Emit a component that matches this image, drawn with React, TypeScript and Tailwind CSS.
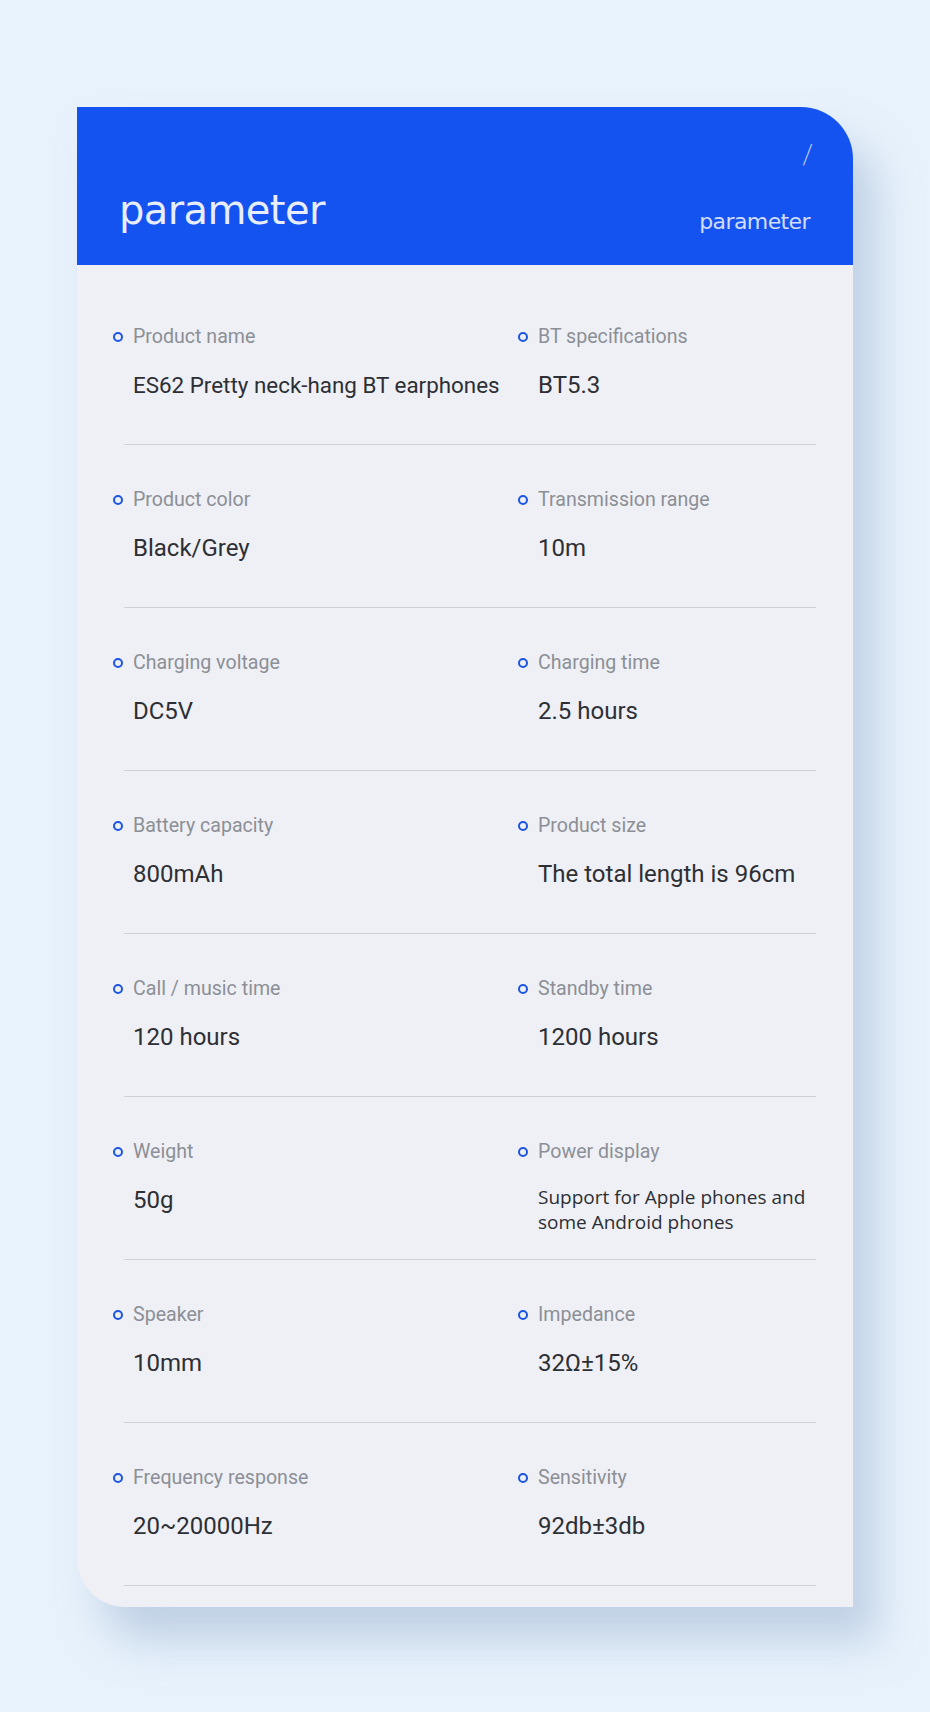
const specs: [string, string, string, string][] = [
  ['Product name', 'ES62 Pretty neck-hang BT earphones', 'BT specifications', 'BT5.3'],
  ['Product color', 'Black/Grey', 'Transmission range', '10m'],
  ['Charging voltage', 'DC5V', 'Charging time', '2.5 hours'],
  ['Battery capacity', '800mAh', 'Product size', 'The total length is 96cm'],
  ['Call / music time', '120 hours', 'Standby time', '1200 hours'],
  ['Weight', '50g', 'Power display', 'Support for Apple phones and some Android phones'],
  ['Speaker', '10mm', 'Impedance', '32Ω±15%'],
  ['Frequency response', '20~20000Hz', 'Sensitivity', '92db±3db'],
];

function Cell({ label, value }: { label: string; value: string }) {
  // the power display text wraps onto two lines in a smaller face
  const wrap = value.startsWith('Support');
  const tight = value.startsWith('ES62');
  return (
    <div className="flex flex-col">
      <div className="flex items-center h-[24px] mt-[43px]">
        <span className="w-[10px] h-[10px] rounded-full border-[2px] border-[#1c55e3] mr-[10px] shrink-0" />
        <span className="text-[19.6px] text-[#8c8f96] whitespace-nowrap">{label}</span>
      </div>
      {wrap ? (
        <div className="ml-[20px] mt-[21px] text-[19px] leading-[25px] text-[#2d2f34] w-[290px] font-['Open_Sans',sans-serif]">
          {value}
        </div>
      ) : (
        <div
          className={
            tight
              ? 'ml-[20px] mt-[21px] h-[30px] leading-[30px] text-[22.4px] text-[#2d2f34] whitespace-nowrap'
              : 'ml-[20px] mt-[21px] h-[30px] leading-[30px] text-[24px] text-[#2d2f34] whitespace-nowrap'
          }
        >
          {value}
        </div>
      )}
    </div>
  );
}

export default function App() {
  return (
    <div className="w-[930px] h-[1712px] bg-[#e8f2fc] pt-[107px] pl-[77px] font-['Roboto',sans-serif]">
      <div className="w-[776px] h-[1500px] bg-[#eef0f5] rounded-tr-[52px] rounded-bl-[48px] overflow-hidden shadow-[24px_34px_40px_rgba(160,182,212,0.55)] flex flex-col">
        {/* header */}
        <div className="h-[158px] bg-[#1553f0] flex justify-between px-[42px]">
          <div className="mt-[73px] text-[40px] leading-[60px] text-[#e7edfb] font-['DejaVu_Sans',sans-serif] tracking-[-0.6px]">
            parameter
          </div>
          <div className="flex flex-col items-end">
            <div className="mt-[33px] mr-[-2px] text-[28px] leading-[30px] text-[#c9d6f7] font-extralight">/</div>
            <div className="mt-[39px] mr-[1px] text-[22px] leading-[26px] text-[#d3ddf8] font-['DejaVu_Sans',sans-serif] tracking-[-0.6px]">
              parameter
            </div>
          </div>
        </div>

        {/* spec list */}
        <div className="pt-[17px] pl-[36px] pr-[37px]">
          {specs.map(([l1, v1, l2, v2]) => (
            <div key={l1} className="h-[163px] flex flex-col">
              <div className="grid grid-cols-[405px_1fr] flex-1">
                <Cell label={l1} value={v1} />
                <Cell label={l2} value={v2} />
              </div>
              <div className="ml-[11px] h-[1px] bg-[#cdd1d9]" />
            </div>
          ))}
        </div>
      </div>
    </div>
  );
}
